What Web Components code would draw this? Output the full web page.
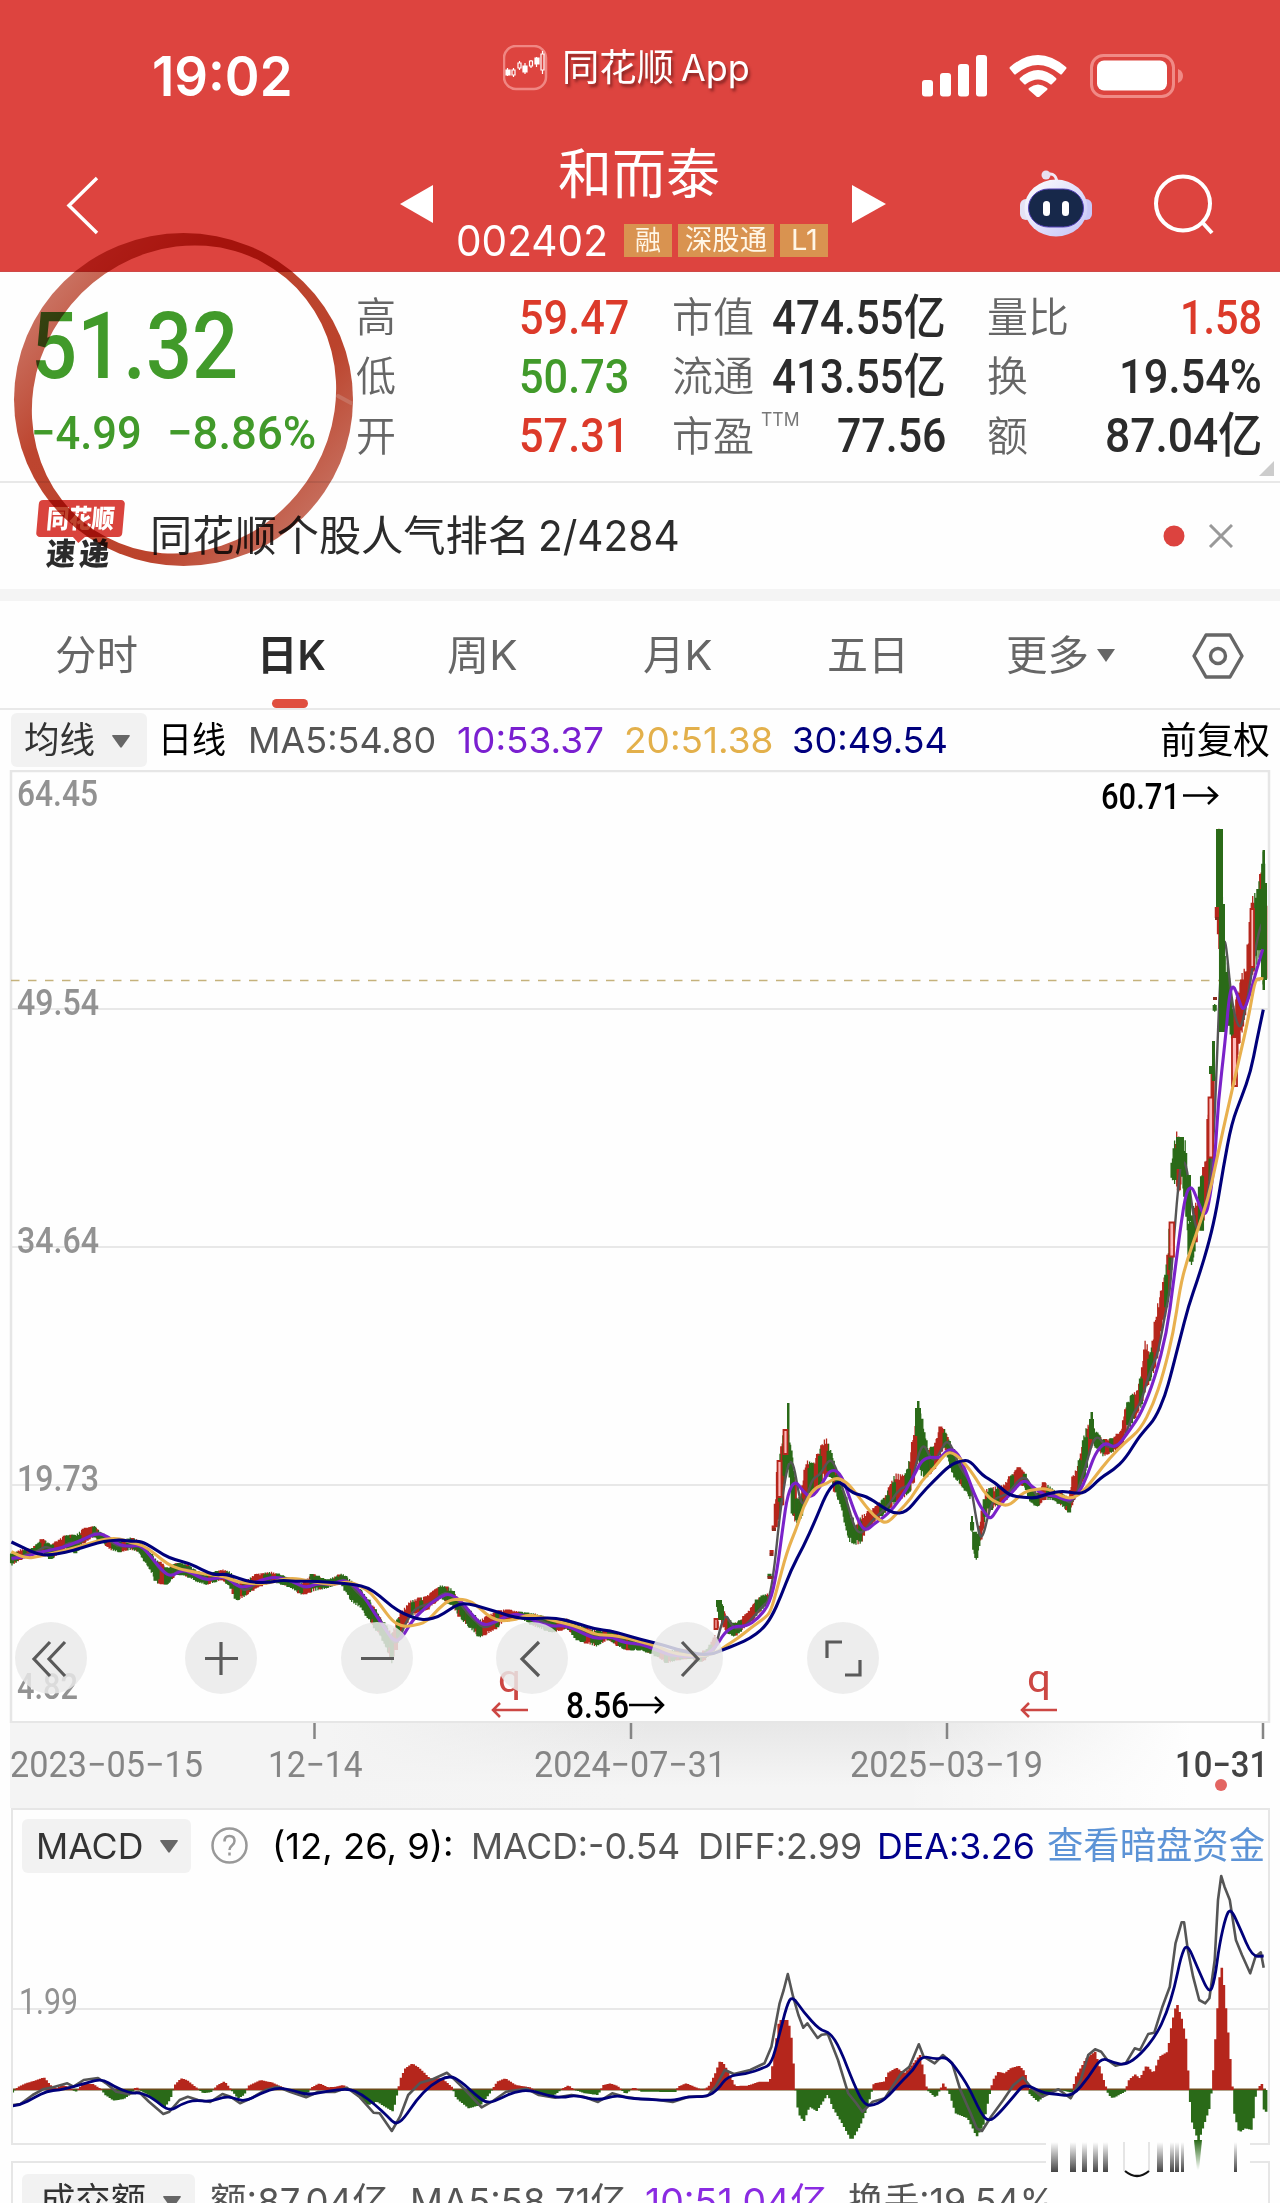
<!DOCTYPE html>
<html lang="zh-CN">
<head>
<meta charset="utf-8">
<meta name="viewport" content="width=1280">
<title>和而泰 002402</title>
<style>
  body {
    margin: 0;
    background: #fefefe;
    --sans: Inter, "Noto Sans CJK SC", sans-serif;
    --din: Roboto, "Noto Sans CJK SC", sans-serif;
    font-family: var(--sans);
    color: #333;
  }
</style>
</head>
<body>
<stock-page></stock-page>

<script>
// One line of text, squeezed or stretched to a fixed width.
class FitText extends HTMLElement {
  constructor() {
    super();
    this.attachShadow({ mode: 'open' });
  }

  connectedCallback() {
    this.shadowRoot.innerHTML = `
      <style>
        :host {
          display: block;
          flex: none;
          width: ${this.getAttribute('w')}px;
          margin-left: ${this.getAttribute('gap') || 0}px;
          font-size: ${this.getAttribute('size') || 36}px;
          line-height: 1;
        }
        span {
          display: inline-block;
          white-space: nowrap;
          transform-origin: 0 50%;
        }
      </style>
      <span><slot></slot></span>
    `;
    const span = this.shadowRoot.querySelector('span');
    const width = span.offsetWidth;
    if (width) {
      span.style.transform = `scaleX(${this.getAttribute('w') / width})`;
    }
  }
}
customElements.define('fit-text', FitText);

class DropButton extends HTMLElement {
  constructor() {
    super();
    this.attachShadow({ mode: 'open' });
    this.shadowRoot.innerHTML = `
      <style>
        :host {
          display: flex;
          align-items: center;
          box-sizing: border-box;
          flex: none;
          height: 54px;
          border-radius: 6px;
          background: #f2f2f2;
          color: #333;
        }
        svg { margin-left: 17px; margin-top: 2px; }
      </style>
      <slot></slot>
      <svg width="18" height="13" viewBox="0 0 18 13"><path d="M1 0h16q1.500 0 .5 1.500L10 12q-1 1.300-2 0L.5 1.500Q-.5 0 1 0z" fill="#666"/></svg>
    `;
  }
}
customElements.define('drop-button', DropButton);

class StatusBar extends HTMLElement {
  connectedCallback() {
    this.attachShadow({ mode: 'open' }).innerHTML = `
      <style>
        :host {
          display: flex;
          align-items: center;
          box-sizing: border-box;
          height: 140px;
          padding: 12px 96px 0 152px;
          color: #fff;
        }
        .time { font-weight: 600; }
        .logo { margin: 0 0 17px 210px; }
        .name { display: flex; align-items: center; margin-bottom: 17px; text-shadow: 2px 3px 3px rgba(90, 20, 20, .65); }
        .icons { display: flex; align-items: center; margin-left: auto; }
      </style>
      <fit-text class="time" w="141" size="55">19:02</fit-text>
      <svg class="logo" width="45" height="46" viewBox="0 0 45 46" fill="none">
        <rect x="1" y="1" width="42" height="43" rx="12" stroke="#f08783" stroke-width="2.500"/>
        <g stroke="#fff" stroke-width="1.200">
          <path d="M4.500 23v8M10.500 23v9M16.500 16v9M22 18v11M28 15v8M33.500 12v10M39.500 6v23"/>
          <path fill="#fff" d="M3 25h4v5H3zM20 21h4v6h-4zM32 13h4v6h-4z"/>
          <path fill="#dd443f" d="M9 25h3v5H9zM15 18h3v5h-3zM26.500 16h3v5h-3zM38 9h3v16h-3z"/>
        </g>
      </svg>
      <div class="name">
        <fit-text w="112" gap="14" size="37">同花顺</fit-text>
        <fit-text w="69" gap="7" size="37">App</fit-text>
      </div>
      <div class="icons">
        <svg width="66" height="42" viewBox="0 0 66 42" fill="#fff">
          <rect y="25" width="11" height="16.500" rx="3"/><rect x="18" y="18" width="11" height="23.500" rx="3"/>
          <rect x="36" y="9" width="11" height="32.500" rx="3"/><rect x="54" width="11" height="41.500" rx="3"/>
        </svg>
        <svg style="margin-left:21px" width="58" height="42" viewBox="0 0 58 42" fill="#fff">
          <path d="M1 12Q29-12 57 12q1 1 0 2l-4 5q-1 1-2 0Q29 1 7 19q-1 1-2 0l-4-5q-1-1 0-2z"/>
          <path d="M11 23Q29 7 47 23q1 1 0 2l-4 4q-1 1-2 0-12-9-24 0-1 1-2 0l-4-4q-1-1 0-2z"/>
          <path d="M20 33q9-7 18 0 1 1 0 2l-8 7q-1 1-2 0l-8-7q-1-1 0-2z"/>
        </svg>
        <svg style="margin-left:23px" width="94" height="44" viewBox="0 0 94 44">
          <rect x="1.500" y="1.500" width="82" height="41" rx="12" fill="none" stroke="#f08a86" stroke-width="3"/>
          <rect x="7" y="6.500" width="70" height="30" rx="7" fill="#fff"/>
          <path d="M88 15q5 2 5 7t-5 7z" fill="#f08a86"/>
        </svg>
      </div>
    `;
  }
}
customElements.define('status-bar', StatusBar);

class NavBar extends HTMLElement {
  connectedCallback() {
    this.attachShadow({ mode: 'open' }).innerHTML = `
      <style>
        :host {
          display: flex;
          align-items: flex-start;
          box-sizing: border-box;
          height: 132px;
          padding-left: 65px;
          color: #fff;
        }
        .stock { width: 371px; margin: 8px 0 0 24px; }
        .title { display: flex; padding-left: 101px; height: 69px; }
        .code { display: flex; align-items: center; height: 46px; }
        .tag {
          display: flex;
          align-items: center;
          justify-content: center;
          height: 33px;
          margin-left: 6px;
          background: #d99350;
          color: #fff6e6;
        }
      </style>
      <svg style="margin-top:36px" width="35" height="59" viewBox="0 0 35 59" fill="none" stroke="#fff" stroke-width="3.500"><path d="M32 2 4 29.500 32 57"/></svg>
      <svg style="margin:45px 0 0 300px" width="33" height="38"><path d="M33 0v38L0 19z" fill="#fff"/></svg>
      <div class="stock">
        <div class="title"><fit-text w="162" size="54">和而泰</fit-text></div>
        <div class="code">
          <fit-text w="152" gap="-1" size="43">002402</fit-text>
          <div class="tag" style="width:48px;margin-left:16px"><fit-text w="26" size="27">融</fit-text></div>
          <div class="tag" style="width:96px"><fit-text w="82" size="28">深股通</fit-text></div>
          <div class="tag" style="width:48px"><fit-text w="27" size="28">L1</fit-text></div>
        </div>
      </div>
      <svg style="margin:45px 0 0 24px" width="34" height="38"><path d="M0 0v38L34 19z" fill="#fff"/></svg>
      <svg style="margin:30px 0 0 133px" width="74" height="68" viewBox="0 0 74 68">
        <defs><linearGradient id="shell" x2="1" y2="1"><stop stop-color="#fff"/><stop offset="1" stop-color="#c4c2f6"/></linearGradient></defs>
        <path d="M27 5q11-4 11 10" fill="none" stroke="#f2e9f4" stroke-width="3"/><circle cx="27" cy="5" r="4.500" fill="#e8dff0"/>
        <rect x="1" y="29" width="12" height="21" rx="6" fill="#e4e2f5"/><rect x="61" y="29" width="12" height="21" rx="6" fill="#c9c7f7"/>
        <ellipse cx="37" cy="38" rx="31.500" ry="28.500" fill="url(#shell)"/>
        <rect x="9.500" y="19" width="55" height="38" rx="20" fill="#17284a" stroke="#5440b8"/>
        <rect x="24" y="31" width="7" height="15" rx="3.500" fill="#fff"/><rect x="43" y="31" width="7" height="15" rx="3.500" fill="#fff"/>
      </svg>
      <svg style="margin:34px 0 0 59px" width="64" height="62" viewBox="0 0 64 62" fill="none" stroke="#fff" stroke-width="4"><circle cx="31" cy="29.500" r="27"/><path d="M50 48l10 11"/></svg>
    `;
  }
}
customElements.define('nav-bar', NavBar);

class QuotePanel extends HTMLElement {
  connectedCallback() {
    const cell = (label, lw, value, vw, cls = '', sup = '') => `
      <div class="cell"><fit-text class="label" w="${lw}" size="41">${label}</fit-text>${sup}<fit-text class="value ${cls}" w="${vw}" size="48">${value}</fit-text></div>`;
    this.attachShadow({ mode: 'open' }).innerHTML = `
      <style>
        :host {
          display: flex;
          position: relative;
          box-sizing: border-box;
          height: 211px;
          border-bottom: 2px solid #e8e8e8;
          font-family: var(--din);
          font-weight: 500;
        }
        .price { width: 356px; color: #419a2a; }
        .last { padding: 28px 0 0 31px; }
        .change { display: flex; padding: 16px 0 0 31px; }
        .col { padding-top: 16px; }
        .cell { display: flex; align-items: center; height: 59.300px; }
        .label { color: #666; font-weight: 350; padding-top: 2px; }
        .value { margin-left: auto; color: #2b2b2b; }
        .up { color: #dc3a2a; }
        .down { color: #419a2a; }
        .sup { margin: -32px 0 0 7px; font-family: var(--sans); font-weight: 400; color: #777; }
        .more { position: absolute; right: 6px; bottom: 5px; }
      </style>
      <div class="price">
        <div class="last"><fit-text w="207" size="93">51.32</fit-text></div>
        <div class="change"><fit-text w="111" size="47">−4.99</fit-text><fit-text w="149" gap="25" size="47">−8.86%</fit-text></div>
      </div>
      <div class="col" style="width:273px">
        ${cell('高', 40, '59.47', 110, 'up')}
        ${cell('低', 40, '50.73', 110, 'down')}
        ${cell('开', 40, '57.31', 110, 'up')}
      </div>
      <div class="col" style="width:274px;margin-left:43px">
        ${cell('市值', 82, '474.55亿', 174)}
        ${cell('流通', 82, '413.55亿', 174)}
        ${cell('市盈', 82, '77.56', 109, '', '<fit-text class="sup" w="39" size="18">TTM</fit-text>')}
      </div>
      <div class="col" style="width:275px;margin-left:41px">
        ${cell('量比', 82, '1.58', 82, 'up')}
        ${cell('换', 41, '19.54%', 143)}
        ${cell('额', 41, '87.04亿', 157)}
      </div>
      <svg class="more" width="15" height="15"><path d="M15 0v15H0z" fill="#ccc"/></svg>
    `;
  }
}
customElements.define('quote-panel', QuotePanel);

class NewsStrip extends HTMLElement {
  connectedCallback() {
    this.attachShadow({ mode: 'open' }).innerHTML = `
      <style>
        :host {
          display: flex;
          align-items: center;
          box-sizing: border-box;
          height: 118px;
          padding-left: 36px;
          border-bottom: 12px solid #f4f4f4;
          color: #2b2b2b;
        }
        .logo { width: 86px; height: 72px; transform: skewX(-5deg); font-weight: 900; }
        .top { display: flex; align-items: center; justify-content: center; height: 37px; border-radius: 4px; background: #d9433d; color: #fff; }
        .tip { display: block; margin: -1px auto 0; }
        .bottom { display: flex; margin: -5px 0 0 12px; }
      </style>
      <div class="logo">
        <div class="top"><fit-text w="68" size="26">同花顺</fit-text></div>
        <svg class="tip" width="14" height="7"><path d="M0 0h14L7 7z" fill="#d9433d"/></svg>
        <div class="bottom"><fit-text w="29" size="31">速</fit-text><fit-text w="30" gap="4" size="31">递</fit-text></div>
      </div>
      <fit-text w="380" gap="28" size="42">同花顺个股人气排名</fit-text>
      <fit-text w="142" gap="8" size="42">2/4284</fit-text>
      <svg style="margin-left:483px" width="70" height="24" viewBox="0 0 70 24">
        <circle cx="11" cy="12" r="10.500" fill="#dc433f"/>
        <path d="M47 1l22 22M69 1 47 23" stroke="#999" stroke-width="3" fill="none"/>
      </svg>
    `;
  }
}
customElements.define('news-strip', NewsStrip);

class PeriodTabs extends HTMLElement {
  connectedCallback() {
    this.attachShadow({ mode: 'open' }).innerHTML = `
      <style>
        :host {
          display: flex;
          align-items: center;
          box-sizing: border-box;
          height: 109px;
          padding: 2px 0 0 55px;
          border-bottom: 2px solid #e9e9e9;
          color: #666;
        }
        .active { position: relative; color: #2b2b2b; font-weight: 600; }
        .active::after {
          content: "";
          position: absolute;
          left: 15px;
          top: 64px;
          width: 36px;
          height: 9px;
          border-radius: 5px;
          background: #e04f3f;
        }
      </style>
      <fit-text w="83" size="41">分时</fit-text>
      <fit-text class="active" w="69" gap="119" size="41">日K</fit-text>
      <fit-text w="71" gap="121" size="41">周K</fit-text>
      <fit-text w="70" gap="125" size="41">月K</fit-text>
      <fit-text w="82" gap="114" size="41">五日</fit-text>
      <fit-text w="83" gap="97" size="41">更多</fit-text>
      <svg style="margin-left:8px" width="18" height="13"><path d="M0 0h18L9 13z" fill="#666"/></svg>
      <svg style="margin-left:77px" width="52" height="46" viewBox="0 0 52 46" fill="none" stroke="#666" stroke-width="3.400" stroke-linejoin="round"><path d="M14 2h24l12 21-12 21H14L2 23z"/><circle cx="26" cy="23" r="7.500"/></svg>
    `;
  }
}
customElements.define('period-tabs', PeriodTabs);

class AverageRow extends HTMLElement {
  connectedCallback() {
    this.attachShadow({ mode: 'open' }).innerHTML = `
      <style>
        :host { display: flex; align-items: center; height: 60px; padding-left: 11px; }
      </style>
      <drop-button style="width:136px;padding-left:13px"><fit-text w="71" size="36">均线</fit-text></drop-button>
      <fit-text w="68" gap="11" size="36" style="color:#000">日线</fit-text>
      <fit-text w="188" gap="22" style="color:#555">MA5:54.80</fit-text>
      <fit-text w="147" gap="21" style="color:#7a1fd0">10:53.37</fit-text>
      <fit-text w="149" gap="20" style="color:#e3b04b">20:51.38</fit-text>
      <fit-text w="156" gap="19" style="color:#00007d">30:49.54</fit-text>
      <fit-text w="110" gap="212" size="37" style="color:#000">前复权</fit-text>
    `;
  }
}
customElements.define('average-row', AverageRow);

// Each series is drawn in a few panes; a pane has its own origin and scale.
const pane = (x0, y0, sx, sy, pts) => pts.trim().split(/\s+/).map((p) => {
  const [x, ...ys] = p.split(',').map(Number);
  return [x0 + x / sx, ...ys.map((y) => y0 + y / sy)];
});
const paneA = (pts) => pane(0, 1480, 2.45, 3, pts);
const paneB = (pts) => pane(640, 1360, 2.45, 3, pts);
const paneC = (pts) => pane(1080, 790, 3, 2.45, pts);
const macdA = (pts) => pane(0, 1800, 2.45, 3, pts);
const macdB = (pts) => pane(640, 1800, 2.45, 3, pts);

// Smooth path through the midpoints of a point list
const curve = (pts) => {
  let d = `M${pts[0][0].toFixed(1)} ${pts[0][1].toFixed(1)}`;
  for (let i = 1; i < pts.length - 1; i++) {
    const [x, y] = pts[i];
    const mx = (x + pts[i + 1][0]) / 2;
    const my = (y + pts[i + 1][1]) / 2;
    d += `Q${x.toFixed(1)} ${y.toFixed(1)} ${mx.toFixed(1)} ${my.toFixed(1)}`;
  }
  const last = pts[pts.length - 1];
  return `${d}L${last[0].toFixed(1)} ${last[1].toFixed(1)}`;
};

const line = (pts) => `M${pts.map(([x, y]) => `${x.toFixed(1)} ${y.toFixed(1)}`).join('L')}`;

const sample = (pts, x, k = 1) => {
  let i = 1;
  while (i < pts.length - 1 && pts[i][0] < x) i++;
  const a = pts[i - 1];
  const b = pts[i];
  const t = Math.min(1, Math.max(0, (x - a[0]) / (b[0] - a[0])));
  return a[k] + (b[k] - a[k]) * t;
};

const ma30 = [
  ...paneA(`28,186 60,205 90,222 122,226 160,217 200,204 240,188 270,181 300,180 322,184 345,183 375,203 400,225 430,240 465,250 495,270 525,285 555,282 585,295 615,307 660,308 690,300 720,304 780,304 830,309 870,314 900,322 930,347 960,380 990,402 1020,416 1045,420 1075,410 1100,390 1125,371 1150,371 1180,382 1220,396 1260,412 1300,417 1345,413 1380,418 1420,432 1460,448 1495,452 1530,464`),
  ...paneB(`0,838 40,849 75,862 110,875 150,884 180,882 205,868 240,852 270,835 300,808 322,772 345,710 370,630 400,560 430,480 455,405 475,370 492,366 520,400 555,408 590,438 620,460 652,458 685,408 720,362 760,315 785,303 808,300 838,346 870,367 905,407 940,412 970,415 1000,400 1035,393 1060,399 1090,400 1130,352 1160,330 1190,295 1220,235`),
  ...paneC(`195,1568 225,1540 255,1485 275,1425 300,1345 325,1265 355,1195 390,1100 410,1025 430,925 455,815 485,752 512,690 530,615 550,538`)
];
const ma20 = [
  ...paneA(`28,215 60,237 100,228 150,214 200,198 250,178 290,174 320,188 350,195 380,222 410,252 440,268 480,277 520,285 550,290 580,305 610,310 650,312 690,298 720,294 750,302 790,310 820,314 850,304 880,316 910,340 935,380 960,422 985,440 1010,438 1045,426 1075,385 1100,360 1130,357 1155,364 1180,390 1205,415 1230,424 1265,418 1290,405 1320,408 1350,420 1385,430 1425,445 1460,465 1500,465 1540,475`),
  ...paneB(`0,845 40,857 75,878 110,885 150,888 185,880 205,862 240,835 270,805 305,775 320,755 335,690 360,575 385,500 400,440 425,385 460,370 480,352 505,365 530,400 560,450 585,480 605,490 630,460 665,415 690,362 720,325 745,285 762,275 785,295 815,340 850,410 880,432 905,438 940,395 970,388 1000,385 1030,408 1060,417 1090,390 1115,350 1150,295 1190,245`),
  ...paneC(`180,1568 220,1505 250,1430 280,1330 300,1220 320,1155 350,1085 385,1000 405,925 430,830 455,740 480,650 505,560 525,465 540,461 550,463`)
];
const ma10 = [
  ...paneA(`28,235 60,232 100,215 150,205 200,180 240,158 265,170 290,195 320,200 345,195 370,230 400,275 420,290 445,270 470,278 500,300 530,295 555,290 580,318 605,322 640,298 680,290 720,305 750,325 780,308 810,316 840,300 865,312 890,345 915,395 940,440 965,485 985,475 1010,420 1050,375 1080,350 1100,340 1130,362 1160,410 1185,438 1215,425 1245,405 1280,402 1310,425 1350,440 1385,435 1420,455 1460,478 1495,468 1530,490`),
  ...paneB(`0,850 40,870 75,885 110,890 150,890 185,865 205,820 230,798 260,800 290,775 318,730 335,640 350,500 362,400 380,360 400,395 420,415 445,375 465,328 490,336 510,400 530,470 550,516 575,490 605,465 640,415 670,350 690,300 715,290 735,295 757,264 780,280 800,340 825,420 845,460 860,480 880,435 910,400 940,356 960,380 990,405 1020,408 1050,425 1075,400 1095,350 1115,280 1140,245 1165,267`),
  ...paneC(`150,1568 185,1525 225,1440 260,1330 280,1210 300,1080 318,985 335,970 350,1000 375,1050 390,1000 405,900 415,760 435,620 448,500 460,476 475,510 490,545 510,500 530,440 548,390`)
];
// x, high, low
const range = [
  ...paneA(`22,228,262 50,208,240 80,205,225 105,175,215 125,195,240 160,165,205 185,165,220 200,150,195 230,137,170 250,160,185 270,180,210 295,185,217 320,172,210 340,180,215 360,210,255 385,240,310 410,265,315 430,250,285 455,250,285 480,270,305 505,285,315 545,268,300 565,275,320 580,305,362 600,305,350 625,282,325 665,275,305 700,290,315 740,310,345 765,282,335 800,300,325 838,280,310 860,300,365 885,330,385 910,370,430 935,420,470 960,460,550 980,400,470 1005,362,410 1045,348,390 1080,315,355 1105,325,375 1135,375,425 1175,420,473 1205,400,455 1235,388,425 1275,395,415 1310,400,440 1355,425,458 1390,415,445 1415,435,480 1460,450,500 1490,448,480 1530,470,510`),
  ...paneB(`0,845,870 30,850,880 65,875,910 95,865,900 125,872,895 150,880,908 170,860,885 183,825,870 188,778,810 194,722,745 202,740,800 215,780,820 230,790,830 250,778,810 270,745,790 295,707,755 314,700,730 317,645,655 322,578,586 327,505,512 332,430,505 340,300,470 350,240,430 357,210,340 363,220,320 370,260,400 375,300,480 385,420,490 395,400,475 408,300,400 425,310,400 440,270,380 455,230,350 465,260,340 478,320,400 490,370,425 500,390,480 512,450,545 527,500,555 543,465,550 555,460,510 575,440,485 600,410,460 625,340,430 650,345,410 665,270,390 675,190,340 681,150,300 690,180,350 705,265,350 720,260,330 735,200,290 747,207,260 760,250,320 775,290,360 800,340,395 808,370,410 812,475,490 817,515,575 824,515,600 832,500,555 838,460,518 850,385,460 870,380,440 890,375,430 910,345,400 930,318,370 945,345,385 955,380,425 975,400,440 990,365,420 1015,390,420 1035,400,440 1052,420,458 1060,350,430 1075,310,390 1090,210,350 1105,180,250 1115,210,260 1135,240,290 1160,235,275 1180,210,260`),
  ...paneC(`135,1520,1568 152,1482,1560 170,1472,1530 185,1430,1510 197,1335,1470 207,1385,1450 220,1350,1430 232,1260,1400 245,1230,1320 258,1165,1280 266,1130,1250 272,1060,1180 275,915,950 281,885,965 287,830,965 297,850,985 305,850,960 318,860,1010 323,960,1100 330,1060,1175 340,1020,1150 352,1005,1080 367,940,1080 380,905,1020 387,755,1000 396,752,930 399,615,710 405,508,514 410,312,317 413,95,285 420,95,480 427,280,590 435,405,590 445,430,560 455,520,610 462,530,728 475,490,640 490,435,580 500,445,520 514,265,460 530,245,430 543,205,395 550,148,480 556,228,465`)
];

class PriceChart extends HTMLElement {
  connectedCallback() {
    const grey = (x, y, w, text) => `<text x="${x}" y="${y}" textLength="${w}" lengthAdjust="spacingAndGlyphs" fill="#929292">${text}</text>`;
    this.attachShadow({ mode: 'open' }).innerHTML = `
      <style>
        :host { display: block; position: relative; height: 953px; }
        svg { display: block; }
        text { font: 500 36px Roboto, sans-serif; }
        .tools { position: absolute; left: 15px; bottom: 29px; display: flex; }
        .tool { width: 72px; height: 72px; border-radius: 50%; background: rgba(233, 233, 233, .84); }
      </style>
      <svg width="1280" height="953" viewBox="0 770 1280 953">
        <path d="M11 1009H1269M11 1247H1269M11 1485H1269" stroke="#e8e8e8" stroke-width="2"/>
        <path d="M11 1723V771H1269V1723" fill="none" stroke="#e6e6e6" stroke-width="2.500"/>
        <path d="M11 980.500H1269" stroke="#c5b27c" stroke-width="1.500" stroke-dasharray="8.500 8.500"/>
        ${grey(17, 806, 81, '64.45')}${grey(17, 1015, 82, '49.54')}${grey(17, 1253, 82, '34.64')}
        ${grey(17, 1491, 82, '19.73')}${grey(17, 1699, 61, '4.82')}
        ${this.candles()}
        <g fill="none" stroke-width="3.100" stroke-linejoin="round">
          <path d="${curve(ma10)}" stroke="#7a22c9"/>
          <path d="${curve(ma20)}" stroke="#e8b04e"/>
          <path d="${curve(ma30)}" stroke="#00007a"/>
        </g>
        <text x="1101" y="809" textLength="79" lengthAdjust="spacingAndGlyphs" fill="#000">60.71</text>
        <path d="M1183 795.500H1217M1208 787l9 8.500-9 8.500" fill="none" stroke="#000" stroke-width="2.500"/>
        <text x="566" y="1718" textLength="63" lengthAdjust="spacingAndGlyphs" fill="#000">8.56</text>
        <path d="M629 1705H663M655 1697l8 8-8 8" fill="none" stroke="#000" stroke-width="2.500"/>
        <g fill="none" stroke="#cc4743" stroke-width="2.500"><path d="M528 1710H493M500 1703l-7 7 7 7M1057 1710h-35M1029 1703l-7 7 7 7"/></g>
        <text x="498" y="1692" textLength="23" lengthAdjust="spacingAndGlyphs" fill="#cc4743" style="font-weight:400;font-size:38px">q</text>
        <text x="1027" y="1692" textLength="24" lengthAdjust="spacingAndGlyphs" fill="#cc4743" style="font-weight:400;font-size:38px">q</text>
        <path d="M11 1722H1269" stroke="#e6e6e6" stroke-width="2"/>
      </svg>
      <div class="tools">
        ${this.tool(0, 'M35 20 19 37l16 17M50 20 34 37l16 17')}
        ${this.tool(98, 'M36 20v33M20 36.500h33')}
        ${this.tool(84, 'M20 36.500h33')}
        ${this.tool(83, 'M43 20 26 37l17 17')}
        ${this.tool(83, 'M31 20 47 37 31 54')}
        ${this.tool(84, 'M20 36V20h15M38 53h15V38')}
      </div>
    `;
  }

  tool(gap, d) {
    return `<div class="tool" style="margin-left:${gap}px"><svg width="72" height="72" fill="none" stroke="#5a5a5a" stroke-width="3.200"><path d="${d}"/></svg></div>`;
  }

  candles() {
    const step = 2.11;
    const closes = [];
    let seed = 7;
    const rnd = () => {
      seed = (seed * 16807) % 2147483647;
      return seed / 2147483647;
    };
    let up = '';
    let down = '';
    let prev = null;
    for (let x = 12; x < 1266; x += step) {
      const hi = sample(range, x, 1);
      const lo = sample(range, x, 2);
      const mid = (hi + lo) / 2;
      const h = lo - hi;
      const top = hi + h * rnd() * 0.28;
      const bottom = lo - h * rnd() * 0.28;
      const rising = prev !== null && mid < prev;
      const isUp = rnd() < (rising ? 0.72 : 0.2);
      const d = `M${x.toFixed(1)} ${hi.toFixed(1)}V${lo.toFixed(1)}M${(x - 1.4).toFixed(1)} ${top.toFixed(1)}h2.800V${bottom.toFixed(1)}h-2.800z`;
      if (isUp) up += d;
      else down += d;
      closes.push([x, mid]);
      prev = mid;
    }
    const ma5 = closes.map(([x], i) => {
      const win = closes.slice(Math.max(0, i - 4), i + 1);
      return [x, win.reduce((sum, c) => sum + c[1], 0) / win.length];
    });
    return `
      <path d="${up}" fill="#b5261c" stroke="#b5261c" stroke-width="1.300"/>
      <path d="${down}" fill="#2a6a18" stroke="#2a6a18" stroke-width="1.300"/>
      <path d="${curve(ma5)}" fill="none" stroke="#555" stroke-width="2.400"/>
      ${this.peaks()}
    `;
  }

  // Candles of the sharp turns, wider than the rest
  peaks() {
    return `
      <g fill="#2a6a18">
        <path d="M1216 829h7v78h-7zM1219 904h6v128h-6zM1261 883h6v97h-6zM1262.500 850h2.500v140h-2.500z"/>
        <path d="M1212 1041h3v40h-3zM1209 1066h4v8h-4zM1176 1137h8v32h-8zM1187 1175h4v46h-4z"/>
        <path d="M787 1403h2.500v60h-2.500zM917 1401h2.500v20h-2.500zM915 1408h6v28h-6zM1089 1419h5v20h-5zM1090.500 1412h2.500v20h-2.500z"/>
        <path d="M716 1600h6v7h-6zM718 1606h6v14h-6zM970 1522h4v3h-4zM971 1516h2v9h-2z"/>
      </g>
      <g fill="#fbb" stroke="#b5261c" stroke-width="1.800">
        <path d="M1208.500 1097.500h4.500v60h-4.500zM1169.500 1222.500h4.500v34h-4.500zM1232 1037h5v49h-5zM1250.500 909h3.500v58h-3.500z"/>
        <path d="M777.500 1461h4v36h-4zM783.500 1430h4v24h-4zM714.500 1619h3v10h-3z"/>
      </g>
      <path d="M1215 917h4v3h-4zM1213 997h4v3h-4zM767.500 1576h5v3h-5zM769.500 1553h4v3h-4zM772 1528h4v3h-4z" fill="#8c2a1c"/>
    `;
  }
}
customElements.define('price-chart', PriceChart);

class DateAxis extends HTMLElement {
  connectedCallback() {
    this.attachShadow({ mode: 'open' }).innerHTML = `
      <style>
        :host {
          display: block;
          position: relative;
          height: 85px;
          margin-left: 10px;
          background:
            linear-gradient(to right, rgba(254,254,254,0) 70%, #fefefe 93%),
            linear-gradient(100deg, #f4f4f4 25%, rgba(244,244,244,0) 50%),
            linear-gradient(#e7e7e7, #f5f5f5 75%);
          font-family: var(--din);
          font-weight: 450;
          color: #858585;
        }
        .ticks { display: block; }
        .dates { display: flex; padding: 7px 0 0 0; }
        .now { color: #444; font-weight: 500; }
        .dot { position: absolute; left: 1205px; top: 56px; width: 12px; height: 12px; border-radius: 50%; background: #e36562; }
      </style>
      <svg class="ticks" width="1270" height="17" viewBox="10 0 1270 17"><path d="M314.500 0v16M631 0v16M947 0v16M1263 0v16" stroke="#858585" stroke-width="2.500"/></svg>
      <div class="dates">
        <fit-text w="193">2023−05−15</fit-text>
        <fit-text w="95" gap="65">12−14</fit-text>
        <fit-text w="192" gap="171">2024−07−31</fit-text>
        <fit-text w="193" gap="124">2025−03−19</fit-text>
        <fit-text class="now" w="93" gap="132">10−31</fit-text>
      </div>
      <div class="dot"></div>
    `;
  }
}
customElements.define('date-axis', DateAxis);

const hist = [
  ...macdA(`28,878 40,862 60,850 80,843 105,832 120,855 135,866 150,856 165,860 182,876 200,852 225,852 245,868 255,885 275,902 300,897 320,880 330,860 345,875 360,885 380,905 400,925 415,895 425,855 440,835 455,840 475,860 495,880 515,876 530,855 547,844 562,868 580,895 595,885 605,858 635,840 665,848 690,862 710,876 745,890 760,862 780,850 800,862 820,860 838,855 855,868 875,890 900,915 920,905 940,920 960,935 972,870 980,830 990,805 1007,790 1025,805 1050,835 1080,835 1105,862 1115,895 1145,925 1175,915 1200,875 1215,845 1235,835 1260,855 1295,862 1320,880 1350,890 1375,866 1390,856 1405,870 1430,880 1462,885 1475,855 1492,850 1510,858 1530,882 1550,862`),
  ...macdB(`0,875 85,876 90,860 110,850 130,860 150,870 165,860 180,825 192,785 200,787 215,820 230,858 260,857 290,845 315,845 325,770 338,660 360,660 368,715 378,870 385,940 398,965 412,920 430,933 445,905 457,882 470,925 490,965 515,1022 535,980 550,935 562,885 570,850 595,845 605,818 625,803 645,820 660,800 683,765 693,820 700,870 722,893 740,850 755,880 770,940 800,955 822,1010 838,975 852,890 862,840 875,815 890,820 905,805 925,797 940,815 950,880 972,905 990,885 1020,868 1055,878 1065,830 1090,775 1112,755 1130,830 1145,885 1155,895 1185,875 1195,840 1210,823 1222,835 1238,795 1255,820 1270,770 1290,755 1300,670 1312,608 1325,660 1335,720 1342,860 1348,960 1365,1025 1380,970 1393,920 1400,840 1410,660 1420,480 1428,560 1438,700 1447,840 1453,940 1465,998 1480,985 1497,990 1505,890 1512,862 1522,850 1526,935 1532,935`)
];
const diff = [
  ...macdA(`28,916 50,912 80,885 105,868 130,862 165,850 180,860 205,840 240,834 260,850 285,875 315,882 340,875 365,905 400,942 415,935 440,900 460,890 485,900 515,906 545,882 565,890 588,910 615,895 650,870 680,860 710,875 750,892 780,875 820,876 850,863 880,890 915,938 930,940 960,993 980,950 1000,885 1030,848 1060,838 1095,818 1115,840 1140,870 1180,922 1205,905 1240,875 1290,866 1320,885 1360,893 1400,885 1430,890 1465,906 1500,880 1530,890`),
  ...macdB(`0,897 40,899 80,906 120,890 165,888 185,860 208,810 230,822 270,810 305,790 322,740 342,610 352,570 362,522 375,590 388,645 400,683 410,670 435,714 445,704 460,702 485,780 510,880 530,910 545,935 570,905 600,895 640,820 660,800 683,733 695,770 722,790 742,765 765,790 785,870 810,940 825,985 838,993 860,950 890,900 915,855 938,832 960,865 985,890 1025,868 1055,895 1080,840 1098,765 1115,748 1130,755 1145,780 1165,797 1190,790 1212,745 1225,750 1245,702 1260,698 1280,620 1298,560 1312,430 1327,367 1333,367 1342,450 1355,530 1370,600 1385,610 1395,595 1408,480 1416,300 1424,228 1432,260 1445,300 1460,420 1475,465 1495,520 1508,470 1521,457 1528,503`)
];
const dea = [
  ...macdA(`28,918 50,915 85,892 115,873 145,870 180,860 215,848 250,836 280,860 320,880 345,878 375,895 415,935 445,912 475,900 515,905 550,890 570,893 600,905 640,880 680,862 720,872 755,885 800,874 855,865 885,882 920,915 950,950 970,974 990,955 1020,900 1055,855 1100,825 1130,845 1165,885 1195,912 1230,893 1260,875 1300,870 1345,888 1380,893 1410,885 1465,902 1510,885 1540,895`),
  ...macdB(`0,896 80,903 115,890 165,890 190,870 215,827 260,822 300,805 322,792 340,710 360,615 373,587 400,635 440,690 465,697 490,745 525,855 545,905 565,920 600,900 640,845 670,810 690,767 725,778 750,770 775,805 805,860 835,940 855,966 880,940 915,890 942,850 985,878 1020,883 1060,889 1100,830 1130,772 1160,788 1190,795 1225,765 1265,705 1290,640 1310,560 1325,470 1340,428 1365,500 1395,585 1408,540 1420,430 1435,350 1447,324 1470,385 1500,470 1528,468`)
];

class MacdPanel extends HTMLElement {
  connectedCallback() {
    this.attachShadow({ mode: 'open' }).innerHTML = `
      <style>
        :host {
          display: block;
          box-sizing: border-box;
          width: 1259px;
          height: 337px;
          margin-left: 11px;
          border: 2px solid #e6e6e6;
        }
        .head { display: flex; align-items: center; height: 63px; padding: 8px 0 0 9px; box-sizing: border-box; }
        svg { display: block; }
        text { font: 400 36px Roboto, sans-serif; }
      </style>
      <div class="head">
        <drop-button style="width:169px;padding-left:14px"><fit-text w="107">MACD</fit-text></drop-button>
        <svg style="margin-left:20px" width="37" height="37" viewBox="0 0 37 37" fill="none" stroke="#999" stroke-width="2.500"><circle cx="18.500" cy="18.500" r="17"/><path d="M13.500 14.500q0-5.500 5-5.500t5 5q0 2.500-2.500 4.500t-2.500 4.500M18.500 25.500v3"/></svg>
        <fit-text w="182" gap="24" style="color:#000">(12, 26, 9):</fit-text>
        <fit-text w="209" gap="17" style="color:#555">MACD:-0.54</fit-text>
        <fit-text w="164" gap="18" style="color:#555">DIFF:2.99</fit-text>
        <fit-text w="158" gap="15" style="color:#00008b">DEA:3.26</fit-text>
        <fit-text w="218" gap="12" size="37" style="color:#5c93d6">查看暗盘资金</fit-text>
      </div>
      <svg width="1255" height="270" viewBox="13 1873 1255 270">
        <path d="M11 2009H1269" stroke="#e8e8e8" stroke-width="2"/>
        <text x="19" y="2014" textLength="59" lengthAdjust="spacingAndGlyphs" fill="#929292">1.99</text>
        ${this.bars()}
        <path d="${line(diff)}" fill="none" stroke="#555" stroke-width="2.600" stroke-linejoin="round"/>
        <path d="${curve(dea)}" fill="none" stroke="#00007a" stroke-width="2.800"/>
      </svg>
    `;
  }

  bars() {
    const zero = 2090;
    let up = '';
    let down = '';
    for (let x = 11.5; x < 1266; x += 2.11) {
      const y = sample(hist, x);
      const d = `M${x.toFixed(1)} ${zero}V${y.toFixed(1)}h2.600V${zero}z`;
      if (y < zero) up += d;
      else down += d;
    }
    return `<path d="M11.500 2089.500H1266" stroke="#6b4a1a" stroke-width="2"/><path d="${up}" fill="#b5261c"/><path d="${down}" fill="#2a6a18"/>`;
  }
}
customElements.define('macd-panel', MacdPanel);

class TurnoverPanel extends HTMLElement {
  connectedCallback() {
    this.attachShadow({ mode: 'open' }).innerHTML = `
      <style>
        :host {
          display: flex;
          align-items: flex-start;
          box-sizing: border-box;
          width: 1259px;
          height: 42px;
          margin: 16px 0 0 11px;
          padding: 11px 0 0 9px;
          border: 2px solid #e6e6e6;
          border-bottom: none;
          overflow: hidden;
          color: #555;
        }
        .row { display: flex; align-items: center; height: 54px; }
      </style>
      <div class="row">
        <drop-button style="width:173px;padding-left:18px"><fit-text w="106">成交额</fit-text></drop-button>
        <fit-text w="179" gap="15">额:87.04亿</fit-text>
        <fit-text w="217" gap="21">MA5:58.71亿</fit-text>
        <fit-text w="183" gap="18" style="color:#8a2be2">10:51.04亿</fit-text>
        <fit-text w="207" gap="20">换手:19.54%</fit-text>
      </div>
    `;
  }
}
customElements.define('turnover-panel', TurnoverPanel);

// Hand-drawn ring round the last price
class PenRing extends HTMLElement {
  connectedCallback() {
    this.attachShadow({ mode: 'open' }).innerHTML = `
      <style>
        :host { position: absolute; left: 0; top: 220px; mix-blend-mode: multiply; }
        svg { display: block; }
      </style>
      <svg width="370" height="360" viewBox="0 220 370 360">
        <defs>
          <linearGradient id="ink" x1=".1" y1=".15" x2=".9" y2=".85">
            <stop stop-color="#cc7666"/><stop offset=".28" stop-color="#be452f"/><stop offset=".72" stop-color="#bc432c"/><stop offset="1" stop-color="#c8705f"/>
          </linearGradient>
          <mask id="hole"><rect y="220" width="370" height="360" fill="#fff"/><ellipse cx="184" cy="399.500" rx="158.500" ry="147.500" transform="rotate(-50 184 399.500)" fill="#000"/></mask>
        </defs>
        <ellipse cx="183.500" cy="399.500" rx="169.500" ry="166.500" fill="url(#ink)" mask="url(#hole)"/>
        <path d="M338 396l13 7" stroke="#c8705f" stroke-width="4" stroke-linecap="round"/>
      </svg>
    `;
  }
}
customElements.define('pen-ring', PenRing);

// Faded strokes left in the lower right corner
class CornerSmear extends HTMLElement {
  connectedCallback() {
    const bars = [[1051, 7], [1070, 6], [1082, 5], [1093, 5], [1103, 5], [1157, 6], [1170, 4], [1175, 4], [1181, 3], [1234, 3]];
    this.attachShadow({ mode: 'open' }).innerHTML = `
      <style>
        :host { position: absolute; left: 1040px; top: 2140px; }
        svg { display: block; }
      </style>
      <svg width="225" height="40" viewBox="1040 2140 225 40">
        <defs>
          <linearGradient id="fade" x2="0" y2="1"><stop stop-color="#fff"/><stop offset="1" stop-color="#444"/></linearGradient>
          <linearGradient id="leaf" x2="0" y2="1"><stop stop-color="#2a6a18"/><stop offset="1" stop-color="#2a6a18" stop-opacity="0"/></linearGradient>
        </defs>
        <path d="M1046 2141h204v32h-204z" fill="#fefefe"/>
        ${bars.map(([x, w]) => `<rect x="${x}" y="2142" width="${w}" height="30" fill="url(#fade)"/>`).join('')}
        <path d="M1124 2142v29M1149 2142v29" stroke="#ccc"/>
        <path d="M1125 2171q12 10 24 0" fill="none" stroke="#111" stroke-width="2.200"/>
        <path d="M1194 2140h8l-3 30h-2z" fill="url(#leaf)"/>
      </svg>
    `;
  }
}
customElements.define('corner-smear', CornerSmear);

class StockPage extends HTMLElement {
  connectedCallback() {
    this.attachShadow({ mode: 'open' }).innerHTML = `
      <style>
        :host { display: block; position: relative; width: 1280px; height: 2203px; overflow: hidden; background: #fefefe; }
        header { height: 272px; background: #dd443f; border-bottom: 1px solid #cf4a48; box-sizing: border-box; }
      </style>
      <header>
        <status-bar></status-bar>
        <nav-bar></nav-bar>
      </header>
      <quote-panel></quote-panel>
      <news-strip></news-strip>
      <period-tabs></period-tabs>
      <average-row></average-row>
      <price-chart></price-chart>
      <date-axis></date-axis>
      <macd-panel></macd-panel>
      <turnover-panel></turnover-panel>
      <pen-ring></pen-ring>
      <corner-smear></corner-smear>
    `;
  }
}
customElements.define('stock-page', StockPage);
</script>
</body>
</html>
